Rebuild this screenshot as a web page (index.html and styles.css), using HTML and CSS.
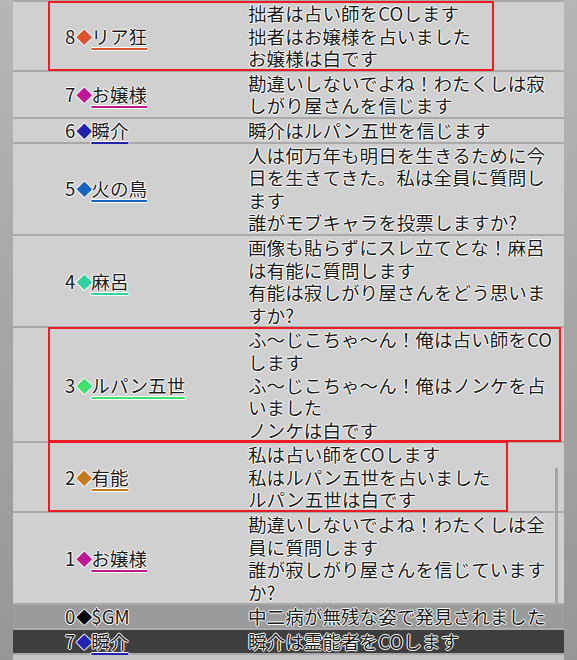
FILE: index.html
```html
<!DOCTYPE html>
<html lang="ja">
<head>
  <meta charset="UTF-8" />
  <meta name="viewport" content="width=device-width, initial-scale=1.0" />
  <title>ログ</title>
  <link rel="stylesheet" href="styles.css">
</head>
<body>
  <div class="screen">
    <div class="log">
      <div class="row">
        <div class="who p-ria"><span class="no">8</span><span class="mark">◆</span><span class="name">リア狂</span></div>
        <div class="msg">拙者は占い師をCOします<br>拙者はお嬢様を占いました<br>お嬢様は白です</div>
        <div class="pick pick-ria"></div>
      </div>
      <div class="row">
        <div class="who p-ojo"><span class="no">7</span><span class="mark">◆</span><span class="name">お嬢様</span></div>
        <div class="msg">勘違いしないでよね！わたくしは寂しがり屋さんを信じます</div>
      </div>
      <div class="row">
        <div class="who p-shun"><span class="no">6</span><span class="mark">◆</span><span class="name">瞬介</span></div>
        <div class="msg">瞬介はルパン五世を信じます</div>
      </div>
      <div class="row">
        <div class="who p-hino"><span class="no">5</span><span class="mark">◆</span><span class="name">火の鳥</span></div>
        <div class="msg">人は何万年も明日を生きるために今日を生きてきた。私は全員に質問します<br>誰がモブキャラを投票しますか?</div>
      </div>
      <div class="row">
        <div class="who p-maro"><span class="no">4</span><span class="mark">◆</span><span class="name">麻呂</span></div>
        <div class="msg">画像も貼らずにスレ立てとな！麻呂は有能に質問します<br>有能は寂しがり屋さんをどう思いますか?</div>
      </div>
      <div class="row">
        <div class="who p-lupin"><span class="no">3</span><span class="mark">◆</span><span class="name">ルパン五世</span></div>
        <div class="msg">ふ〜じこちゃ〜ん！俺は占い師をCOします<br>ふ〜じこちゃ〜ん！俺はノンケを占いました<br>ノンケは白です</div>
        <div class="pick pick-lupin"></div>
      </div>
      <div class="row">
        <div class="who p-yuno"><span class="no">2</span><span class="mark">◆</span><span class="name">有能</span></div>
        <div class="msg">私は占い師をCOします<br>私はルパン五世を占いました<br>ルパン五世は白です</div>
        <div class="pick pick-yuno"></div>
      </div>
      <div class="row">
        <div class="who p-ojo"><span class="no">1</span><span class="mark">◆</span><span class="name">お嬢様</span></div>
        <div class="msg">勘違いしないでよね！わたくしは全員に質問します<br>誰が寂しがり屋さんを信じていますか?</div>
      </div>
      <div class="row row-gm">
        <div class="who p-gm"><span class="no">0</span><span class="mark">◆</span><span class="gm">$GM</span></div>
        <div class="msg">中二病が無残な姿で発見されました</div>
      </div>
      <div class="row row-dark">
        <div class="who p-shun"><span class="no">7</span><span class="mark">◆</span><span class="name">瞬介</span></div>
        <div class="msg">瞬介は霊能者をCOします</div>
      </div>
      <div class="row row-next">
        <div class="who"></div>
        <div class="msg">&nbsp;</div>
      </div>
    </div>
    <div class="thumb"></div>
  </div>
</body>
</html>
```

FILE: styles.css
```css
:root {
  --row: #d0d0d0;
  --line: #a9a9a9;
  --ink: #1a1a1a;
  --pick: #ec1c24;
}
body {
  margin: 0;
  background: linear-gradient(to bottom, #b6b6b6, #969696);
  font-family: "Noto Sans CJK JP", "Noto Sans", sans-serif;
  font-size: 18.6px;
  line-height: 22.6px;
  color: var(--ink);
}
.screen {
  position: relative;
  height: 660px;
  overflow: hidden;
  padding: 0 13px;
}
.log {
  display: flex;
  flex-direction: column;
  gap: 2px;
  padding-top: 2px;
  background: var(--line);
}
.row {
  position: relative;
  display: grid;
  grid-template-columns: 235px 1fr;
  background: var(--row);
  text-shadow: 1px 0 0 #fff, -1px 0 0 #fff, 0 1px 0 #fff, 0 -1px 0 #fff, 0 0 1px #fff;
}
.row-gm { background: #9b9b9b; }
.row-dark { background: #3e3e3e; }
.row-next { background: #c4c4c4; }
.who {
  display: flex;
  align-items: center;
  padding-left: 52px;
  white-space: nowrap;
}
.mark {
  display: inline-block;
  width: 14px;
  text-align: center;
  font-size: 16px;
  color: var(--c);
  margin: 0 1px;
}
.name {
  text-decoration: underline;
  text-decoration-color: var(--c);
  text-decoration-thickness: 2px;
  text-underline-offset: 4px;
}
.msg {
  padding-right: 6px;
}
.p-ria { --c: #df5230; }
.p-ojo { --c: #bf1896; }
.p-shun { --c: #2222b0; }
.p-hino { --c: #1763c3; }
.p-maro { --c: #2fd29f; }
.p-lupin { --c: #3fe06f; }
.p-yuno { --c: #c47a1c; }
.p-gm { --c: #000; }

.pick {
  position: absolute;
  left: 35px;
  top: -1px;
  bottom: -1px;
  border: 2px solid var(--pick);
}
.pick-ria { width: 442px; }
.pick-lupin { width: 509px; }
.pick-yuno { width: 456px; top: -2px; }

.thumb {
  position: absolute;
  left: 555px;
  top: 468px;
  width: 3px;
  height: 135px;
  background: #a6a6a6;
}
```
